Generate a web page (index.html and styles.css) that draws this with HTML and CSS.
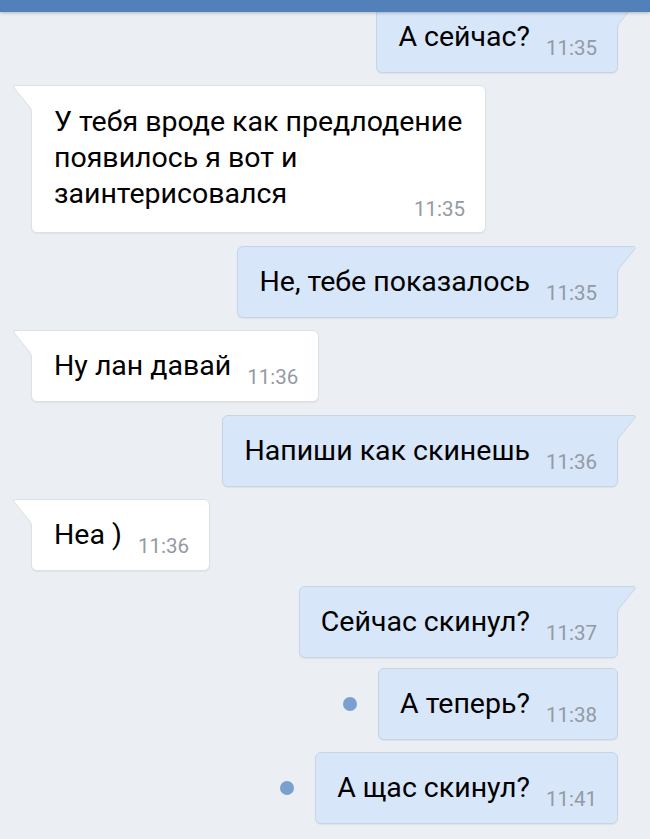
FILE: index.html
```html
<!DOCTYPE html>
<html lang="ru">
<head>
<meta charset="utf-8">
<link rel="stylesheet" href="styles.css">
</head>
<body>
<div class="topbar"></div>
<div class="chat">
  <div class="row out">
    <div class="bubble out tail">А сейчас?<span class="time">11:35</span>
      <svg class="tail-svg out-tail" width="22" height="28" viewBox="0 0 22 28"><path d="M0 1 H17 Q20 1 18.5 3 L3 22 Q1 25 1 28 H0 Z" fill="#d7e6f8"/><path d="M0 0.5 H17 Q20.5 0.5 18.8 3 L3.4 22 Q1.5 24.8 1.5 28" fill="none" stroke="#c6d5e6" stroke-width="1"/></svg>
    </div>
  </div>
  <div class="row in">
    <div class="bubble in tail wide">У тебя вроде как предлодение появилось я вот и заинтерисовался<span class="time">11:35</span>
      <svg class="tail-svg in-tail" width="22" height="28" viewBox="0 0 22 28"><path d="M22 1 H5 Q2 1 3.5 3 L19 22 Q21 25 21 28 H22 Z" fill="#ffffff"/><path d="M22 0.5 H5 Q1.5 0.5 3.2 3 L18.6 22 Q20.5 24.8 20.5 28" fill="none" stroke="#dbe1e8" stroke-width="1"/></svg>
    </div>
  </div>
  <div class="row out">
    <div class="bubble out tail">Не, тебе показалось<span class="time">11:35</span>
      <svg class="tail-svg out-tail" width="22" height="28" viewBox="0 0 22 28"><path d="M0 1 H17 Q20 1 18.5 3 L3 22 Q1 25 1 28 H0 Z" fill="#d7e6f8"/><path d="M0 0.5 H17 Q20.5 0.5 18.8 3 L3.4 22 Q1.5 24.8 1.5 28" fill="none" stroke="#c6d5e6" stroke-width="1"/></svg>
    </div>
  </div>
  <div class="row in">
    <div class="bubble in tail">Ну лан давай<span class="time">11:36</span>
      <svg class="tail-svg in-tail" width="22" height="28" viewBox="0 0 22 28"><path d="M22 1 H5 Q2 1 3.5 3 L19 22 Q21 25 21 28 H22 Z" fill="#ffffff"/><path d="M22 0.5 H5 Q1.5 0.5 3.2 3 L18.6 22 Q20.5 24.8 20.5 28" fill="none" stroke="#dbe1e8" stroke-width="1"/></svg>
    </div>
  </div>
  <div class="row out">
    <div class="bubble out tail">Напиши как скинешь<span class="time">11:36</span>
      <svg class="tail-svg out-tail" width="22" height="28" viewBox="0 0 22 28"><path d="M0 1 H17 Q20 1 18.5 3 L3 22 Q1 25 1 28 H0 Z" fill="#d7e6f8"/><path d="M0 0.5 H17 Q20.5 0.5 18.8 3 L3.4 22 Q1.5 24.8 1.5 28" fill="none" stroke="#c6d5e6" stroke-width="1"/></svg>
    </div>
  </div>
  <div class="row in">
    <div class="bubble in tail">Неа )<span class="time">11:36</span>
      <svg class="tail-svg in-tail" width="22" height="28" viewBox="0 0 22 28"><path d="M22 1 H5 Q2 1 3.5 3 L19 22 Q21 25 21 28 H22 Z" fill="#ffffff"/><path d="M22 0.5 H5 Q1.5 0.5 3.2 3 L18.6 22 Q20.5 24.8 20.5 28" fill="none" stroke="#dbe1e8" stroke-width="1"/></svg>
    </div>
  </div>
  <div class="row out more-space">
    <div class="bubble out tail">Сейчас скинул?<span class="time">11:37</span>
      <svg class="tail-svg out-tail" width="22" height="28" viewBox="0 0 22 28"><path d="M0 1 H17 Q20 1 18.5 3 L3 22 Q1 25 1 28 H0 Z" fill="#d7e6f8"/><path d="M0 0.5 H17 Q20.5 0.5 18.8 3 L3.4 22 Q1.5 24.8 1.5 28" fill="none" stroke="#c6d5e6" stroke-width="1"/></svg>
    </div>
  </div>
  <div class="row out less-space">
    <span class="unread"></span>
    <div class="bubble out">А теперь?<span class="time">11:38</span></div>
  </div>
  <div class="row out">
    <span class="unread"></span>
    <div class="bubble out">А щас скинул?<span class="time">11:41</span></div>
  </div>
</div>
</body>
</html>
```

FILE: styles.css
```css
* { box-sizing: border-box; }
html, body {
  margin: 0;
  padding: 0;
  background: #ebeff3;
  height: 100%;
  overflow: hidden;
}
body {
  font-family: Roboto, "Noto Sans", sans-serif;
  color: #000;
  position: relative;
}
.topbar {
  position: absolute;
  top: 0;
  left: 0;
  right: 0;
  height: 12px;
  background: #5181b8;
  box-shadow: 0 1px 3px rgba(0, 0, 0, 0.25);
  z-index: 5;
}
.chat {
  display: flex;
  flex-direction: column;
  gap: 12.4px;
  padding: 1px 32px 0 31px;
}
.row {
  display: flex;
  align-items: center;
}
.row.out { justify-content: flex-end; }
.row.in { justify-content: flex-start; }
.row.more-space { margin-top: 3px; }
.row.less-space { margin-top: -3px; }
.bubble {
  position: relative;
  border-radius: 6px;
  padding: 17px 20px 17px 21px;
  font-size: 28.5px;
  line-height: 36px;
  box-shadow: 0 1px 1px rgba(0, 0, 0, 0.06);
}
.bubble.in {
  background: #ffffff;
  border: 1px solid #dbe1e8;
  padding-left: 22px;
}
.bubble.out {
  background: #d7e6f8;
  border: 1px solid #c6d5e6;
}
.bubble.in.tail { border-top-left-radius: 0; }
.bubble.out.tail { border-top-right-radius: 0; }
.bubble.wide {
  max-width: 455px;
  padding-top: 18px;
  padding-bottom: 13px;
}
.time {
  display: inline-block;
  margin-left: 16px;
  font-size: 20.5px;
  line-height: 0;
  color: #939aa3;
  vertical-align: -9px;
}
.bubble.wide .time {
  float: right;
  line-height: 20px;
  margin-top: 23px;
}
.tail-svg {
  position: absolute;
  top: -1px;
  display: block;
}
.out-tail { right: -21px; }
.in-tail { left: -21px; }
.unread {
  width: 14px;
  height: 14px;
  border-radius: 50%;
  background: #7aa0cf;
  margin-right: 21px;
  flex: none;
}
```
